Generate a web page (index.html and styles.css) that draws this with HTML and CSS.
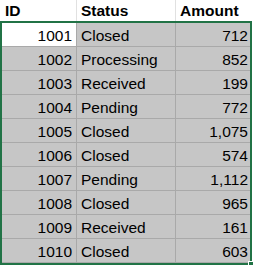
FILE: index.html
```html
<!DOCTYPE html>
<html>
<head>
<meta charset="utf-8">
<link rel="stylesheet" href="styles.css">
</head>
<body>
<div class="sheet">
  <div class="header">
    <div class="cell hcell">ID</div>
    <div class="cell hcell">Status</div>
    <div class="cell hcell">Amount</div>
  </div>
  <div class="selection">
    <div class="row"><div class="cell num active">1001</div><div class="cell">Closed</div><div class="cell num last">712</div></div>
    <div class="row"><div class="cell num">1002</div><div class="cell">Processing</div><div class="cell num last">852</div></div>
    <div class="row"><div class="cell num">1003</div><div class="cell">Received</div><div class="cell num last">199</div></div>
    <div class="row"><div class="cell num">1004</div><div class="cell">Pending</div><div class="cell num last">772</div></div>
    <div class="row"><div class="cell num">1005</div><div class="cell">Closed</div><div class="cell num last">1,075</div></div>
    <div class="row"><div class="cell num">1006</div><div class="cell">Closed</div><div class="cell num last">574</div></div>
    <div class="row"><div class="cell num">1007</div><div class="cell">Pending</div><div class="cell num last">1,112</div></div>
    <div class="row"><div class="cell num">1008</div><div class="cell">Closed</div><div class="cell num last">965</div></div>
    <div class="row"><div class="cell num">1009</div><div class="cell">Received</div><div class="cell num last">161</div></div>
    <div class="row"><div class="cell num">1010</div><div class="cell">Closed</div><div class="cell num last">603</div></div>
    <div class="handle"></div>
  </div>
</div>
</body>
</html>
```
FILE: styles.css
```css
html, body {
  margin: 0;
  padding: 0;
  background: #ffffff;
}
.sheet {
  width: 254px;
  font-family: "Liberation Sans", Arial, sans-serif;
  font-size: 15.5px;
  color: #000000;
}
.header {
  display: grid;
  grid-template-columns: 77px 99px 76px;
  height: 21px;
}
.hcell {
  font-weight: bold;
  border-right: 1px solid #e1e1e1;
  padding-left: 4px;
}
.header .hcell:first-child {
  padding-left: 5px;
}
.header .hcell:last-child {
  border-right: none;
}
.cell {
  display: flex;
  align-items: center;
  padding: 0 4px;
  box-sizing: border-box;
  overflow: hidden;
  white-space: nowrap;
}
.selection {
  position: relative;
  width: 252px;
  box-sizing: border-box;
  border: 2px solid #217346;
}
.row {
  display: grid;
  grid-template-columns: 75px 99px 74px;
  height: 24px;
  background: #c6c6c6;
  border-bottom: 1px solid #a9a9a9;
  box-sizing: border-box;
}
.row:last-of-type {
  height: 23px;
  border-bottom: none;
}
.row .cell {
  border-right: 1px solid #a9a9a9;
  padding-top: 2px;
}
.row .cell.last {
  border-right: none;
  padding-right: 2px;
}
.num {
  justify-content: flex-end;
}
.active {
  background: #ffffff;
}
.handle {
  position: absolute;
  right: -4px;
  bottom: -4px;
  width: 4px;
  height: 4px;
  background: #217346;
  border: 1px solid #ffffff;
}
```
